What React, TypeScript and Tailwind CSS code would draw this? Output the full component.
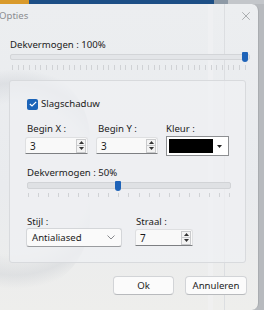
import { X } from "lucide-react";

const font = { fontFamily: '"Noto Sans", "Open Sans", Arial, sans-serif' };

function SpinBox({ value, width }: { value: string; width: string }) {
  return (
    <div
      className={`flex h-[17px] ${width} -ml-[2px] items-center justify-between rounded-t-[3px] border border-[#dedfe1] border-b-[#7d7f82] bg-[#f9f9f9] pl-[4px] pr-[1px]`}
    >
      <span className="text-[10px] leading-[14px] text-[#1b1b1b]">{value}</span>
      <div className="flex h-[14px] w-[10px] flex-col border border-[#c9cacc] bg-[#f3f3f3]">
        <div className="flex flex-1 items-center justify-center border-b border-[#c9cacc]">
          <svg width="5" height="3" viewBox="0 0 5 3">
            <path d="M0 3 L2.5 0 L5 3 Z" fill="#333" />
          </svg>
        </div>
        <div className="flex flex-1 items-center justify-center">
          <svg width="5" height="3" viewBox="0 0 5 3">
            <path d="M0 0 L2.5 3 L5 0 Z" fill="#333" />
          </svg>
        </div>
      </div>
    </div>
  );
}

function Ticks({ count, className }: { count: number; className: string }) {
  return (
    <div className={`flex justify-between ${className}`}>
      {Array.from({ length: count }).map((_, i) => (
        <span key={i} className="h-full w-px bg-[#d0d2d5]" />
      ))}
    </div>
  );
}

const label = "text-[9.6px] leading-[14px] text-[#1b1b1b]";

export default function App() {
  return (
    <div
      className="flex h-[310px] w-[264px] flex-col overflow-hidden bg-[#b7babe]"
      style={font}
    >
      <div className="flex h-[4px] shrink-0">
        <div className="w-[29px] bg-[#d99a2b]" />
        <div className="w-[185px] bg-[#1d4f86]" />
        <div className="w-[14px] bg-[#8e9aa6]" />
        <div className="flex-1 bg-[#c3c6ca]" />
      </div>

      <div className="relative mr-[5px] flex flex-1 flex-col overflow-hidden rounded-tr-[7px] rounded-br-[7px] border-r border-[#a9acb0] bg-[linear-gradient(180deg,#eceef0_0%,#e9ebee_60%,#eeeeec_100%)]">
        <div className="pointer-events-none absolute left-[-60px] top-[60px] h-[230px] w-[150px] rounded-full bg-[radial-gradient(circle,rgba(200,204,210,0)_55%,rgba(196,200,206,0.35)_70%,rgba(200,204,210,0)_80%)]" />
        <div className="pointer-events-none absolute left-[208px] top-0 h-full w-[5px] bg-[#f1f2f4]/60" />
        <div className="pointer-events-none absolute left-[224px] top-0 h-full w-px bg-[#dcdee1]" />

        <div className="relative flex h-[24px] shrink-0 items-center justify-between pr-[5px]">
          <span className="-ml-[1px] text-[9.6px] text-[#8b8d90]">Opties</span>
          <X size={14} strokeWidth={1.2} className="text-[#8e9093]" />
        </div>

        <div className={`relative mt-[10px] pl-[10px] ${label}`}>Dekvermogen : 100%</div>

        <div className="relative ml-[10px] mr-[8px] mt-[2px] h-[6px] rounded-[2px] border border-[#d3d5d8] bg-[#e3e5e8]">
          <div className="absolute right-[1px] top-[-3px] h-[10px] w-[6px] rounded-b-[3px] rounded-t-[1px] bg-[#1e63b8]" />
        </div>
        <Ticks count={42} className="relative ml-[12px] mr-[12px] mt-[5px] h-[5px]" />

        <div className="relative ml-[9px] mr-[12px] mt-[10px] flex h-[183px] flex-col rounded-[3px] border border-[#d8dadd] bg-[#f0f1f3]/70 pl-[17px] pr-[14px]">
          <div className="mt-[16px] flex items-center">
            <div className="flex h-[11px] w-[11px] items-center justify-center rounded-[2px] bg-[#1c64b8]">
              <svg width="8" height="6" viewBox="0 0 8 6">
                <path d="M0.8 3 L3 5 L7.2 0.8" fill="none" stroke="#fff" strokeWidth="1.2" />
              </svg>
            </div>
            <span className={`ml-[3px] ${label}`}>Slagschaduw</span>
          </div>

          <div className="mt-[11px] flex">
            <div className="flex w-[71px] flex-col">
              <span className={label}>Begin X :</span>
              <div className="mt-[1px]">
                <SpinBox value="3" width="w-[63px]" />
              </div>
            </div>
            <div className="flex w-[68px] flex-col">
              <span className={label}>Begin Y :</span>
              <div className="mt-[1px]">
                <SpinBox value="3" width="w-[62px]" />
              </div>
            </div>
            <div className="flex flex-col">
              <span className={label}>Kleur :</span>
              <div className="flex h-[20px] w-[63px] items-stretch border border-[#8d8f92] bg-white p-[2px]">
                <div className="flex-1 bg-black" />
                <div className="flex w-[13px] items-center justify-center">
                  <svg width="5" height="3" viewBox="0 0 5 3">
                    <path d="M0 0 L2.5 3 L5 0 Z" fill="#222" />
                  </svg>
                </div>
              </div>
            </div>
          </div>

          <div className={`mt-[10px] ${label}`}>Dekvermogen : 50%</div>
          <div className="relative mt-[2px] h-[7px] w-[204px] rounded-[2px] border border-[#d1d3d6] bg-[#dfe1e4]">
            <div className="absolute left-[87px] top-[-2px] h-[10px] w-[6px] rounded-b-[3px] rounded-t-[1px] bg-[#1e63b8]" />
          </div>
          <Ticks count={21} className="ml-[1px] mt-[4px] h-[4px] w-[202px]" />

          <div className="mt-[18px] flex">
            <div className="flex w-[109px] flex-col">
              <span className="text-[9.6px] leading-[13px] text-[#1b1b1b]">Stijl :</span>
              <div className="-ml-[1px] flex h-[19px] w-[96px] items-center justify-between rounded-[3px] border border-[#d4d6d9] border-b-[#9a9c9f] bg-[#fafafa] pl-[5px] pr-[6px]">
                <span className="text-[9.6px] leading-[14px] text-[#1b1b1b]">Antialiased</span>
                <svg width="8" height="5" viewBox="0 0 8 5">
                  <path d="M0.5 0.5 L4 4 L7.5 0.5" fill="none" stroke="#7a7c80" strokeWidth="0.9" />
                </svg>
              </div>
            </div>
            <div className="flex flex-col">
              <span className="text-[9.6px] leading-[13px] text-[#1b1b1b]">Straal :</span>
              <div className="ml-[1px] mt-[1px]">
                <SpinBox value="7" width="w-[58px]" />
              </div>
            </div>
          </div>
        </div>

        <div className="relative mt-[13px] flex justify-end gap-[11px] pr-[11px]">
          <button className="h-[19px] w-[61px] rounded-[4px] border border-[#d2d4d7] border-b-[#b8babd] bg-[#fbfbfb] text-[9.6px] leading-[14px] text-[#1b1b1b]">
            Ok
          </button>
          <button className="h-[19px] w-[62px] rounded-[4px] border border-[#d2d4d7] border-b-[#b8babd] bg-[#fbfbfb] text-[9.6px] leading-[14px] text-[#1b1b1b]">
            Annuleren
          </button>
        </div>
      </div>
    </div>
  );
}
